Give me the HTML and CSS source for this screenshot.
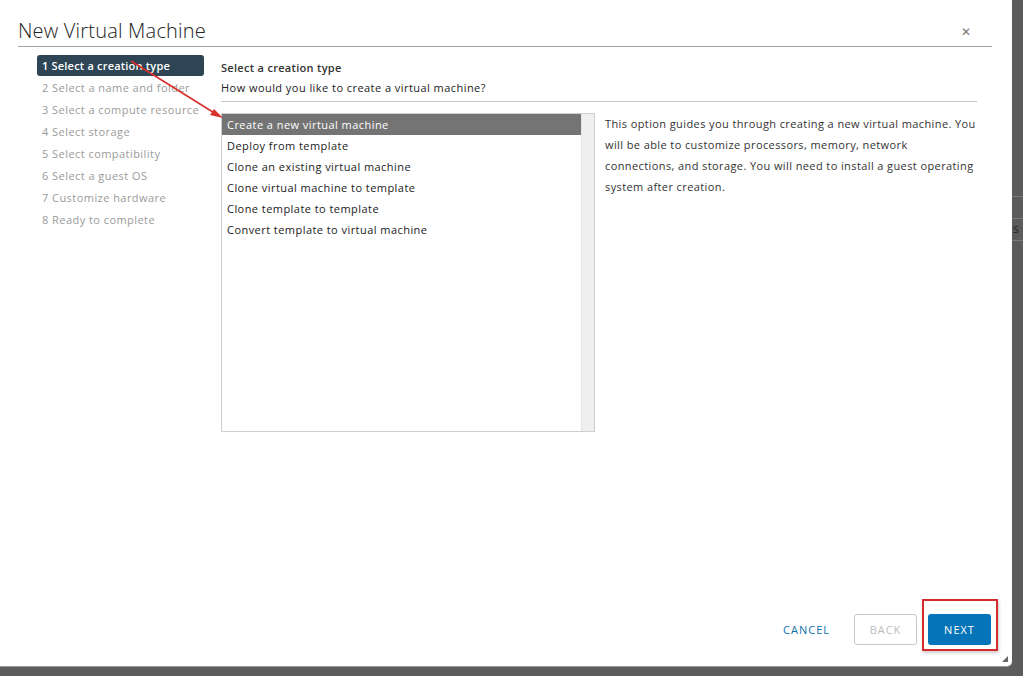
FILE: index.html
```html
<!DOCTYPE html>
<html>
<head>
  <meta charset="utf-8">
  <meta name="viewport" content="width=device-width, initial-scale=1.0">
  <title>New Virtual Machine</title>
  <link rel="stylesheet" href="styles.css">
</head>
<body>
    <div class="modal">
        <div class="modal-header">
            <h1 class="modal-title">New Virtual Machine</h1>
            <span class="close">&#x2715;</span>
        </div>
        <div class="modal-body">
            <ul class="steps">
                <li class="step active">1 Select a creation type</li>
                <li class="step">2 Select a name and folder</li>
                <li class="step">3 Select a compute resource</li>
                <li class="step">4 Select storage</li>
                <li class="step">5 Select compatibility</li>
                <li class="step">6 Select a guest OS</li>
                <li class="step">7 Customize hardware</li>
                <li class="step">8 Ready to complete</li>
            </ul>
            <div class="step-content">
                <div class="step-title">Select a creation type</div>
                <div class="step-question">How would you like to create a virtual machine?</div>
                <div class="choice-row">
                    <div class="list-box">
                        <ul class="options">
                            <li class="option selected">Create a new virtual machine</li>
                            <li class="option">Deploy from template</li>
                            <li class="option">Clone an existing virtual machine</li>
                            <li class="option">Clone virtual machine to template</li>
                            <li class="option">Clone template to template</li>
                            <li class="option">Convert template to virtual machine</li>
                        </ul>
                        <div class="scroll-track"></div>
                    </div>
                    <p class="description">This option guides you through creating a new virtual machine. You will be able to customize processors, memory, network connections, and storage. You will need to install a guest operating system after creation.</p>
                </div>
            </div>
        </div>
        <div class="modal-footer">
            <button class="btn btn-link">CANCEL</button>
            <button class="btn btn-outline" disabled>BACK</button>
            <span class="highlight">
                <button class="btn btn-primary">NEXT</button>
            </span>
        </div>
        <span class="grip"></span>
        <!-- annotation arrow -->
        <svg class="arrow" width="1012" height="666" viewBox="0 0 1012 666">
            <line x1="131" y1="61" x2="216" y2="114" stroke="#d9302c" stroke-width="1.6"/>
            <polygon points="223,118 210,115 214,109" fill="#d9302c"/>
        </svg>
    </div>
    <div class="backdrop">
        <div class="backdrop-row"></div>
        <div class="backdrop-row text-row">s</div>
        <div class="backdrop-row"></div>
    </div>
</body>
</html>
```

FILE: styles.css
```css
* {
    box-sizing: border-box;
}
body {
    margin: 0;
    height: 676px;
    overflow: hidden;
    display: flex;
    align-items: flex-start;
    background-color: #5c5c5c;
    font-family: "Open Sans", "Liberation Sans", sans-serif;
    font-size: 11px;
    letter-spacing: 0.45px;
    color: #333;
}
ul {
    list-style: none;
    margin: 0;
    padding: 0;
}

/* Modal */
.modal {
    position: relative;
    width: 1012px;
    height: 666px;
    flex: none;
    display: flex;
    flex-direction: column;
    background-color: #fff;
    border-bottom-right-radius: 5px;
    box-shadow: 0 1px 0 #9a9a9a;
}
.modal-header {
    display: flex;
    align-items: center;
    justify-content: space-between;
    height: 47px;
    margin: 0 20px 0 18px;
    padding-top: 14px;
    border-bottom: 1px solid #a3a3a3;
}
.modal-title {
    margin: 0;
    font-size: 20px;
    font-weight: 300;
    color: #222;
    letter-spacing: 0.2px;
}
.close {
    margin-right: 21px;
    margin-top: 2px;
    font-size: 12px;
    color: #777;
}
.modal-body {
    display: flex;
    flex: 1;
}

/* Wizard steps */
.steps {
    width: 204px;
    flex: none;
    padding: 8px 0 0 37px;
}
.step {
    height: 22px;
    line-height: 21px;
    padding-left: 5px;
    color: #9b9b9b;
    white-space: nowrap;
}
.step.active {
    height: 21px;
    margin-bottom: 1px;
    background-color: #2d4554;
    border-radius: 3px;
    color: #fff;
    font-weight: 600;
    letter-spacing: 0.2px;
}

/* Step content */
.step-content {
    width: 756px;
    margin-left: 17px;
    padding-top: 11px;
}
.step-title {
    line-height: 20px;
    font-weight: 600;
    letter-spacing: 0.3px;
    color: #333;
}
.step-question {
    line-height: 20px;
    padding-bottom: 3px;
    border-bottom: 1px solid #c6c6c6;
    color: #222;
}
.choice-row {
    display: flex;
    margin-top: 11px;
}
.list-box {
    display: flex;
    flex: none;
    width: 374px;
    height: 319px;
    border: 1px solid #cfcfcf;
}
.options {
    flex: 1;
}
.option {
    height: 21px;
    line-height: 21px;
    padding-left: 5px;
    color: #222;
}
.option.selected {
    background-color: #747474;
    color: #fff;
}
.scroll-track {
    width: 13px;
    background-color: #efefef;
    border-left: 1px solid #e4e4e4;
}
.description {
    flex: none;
    width: 373px;
    margin: 0 0 0 10px;
    line-height: 21px;
    letter-spacing: 0.4px;
    color: #333;
}

/* Footer */
.modal-footer {
    display: flex;
    justify-content: flex-end;
    align-items: flex-end;
    padding: 0 14px 15px 0;
}
.btn {
    height: 31px;
    font-family: inherit;
    font-size: 11px;
    letter-spacing: 1px;
    border-radius: 3px;
    margin-bottom: 6px;
}
.btn-link {
    padding: 0 12px;
    margin-right: 12px;
    border: none;
    background: none;
    color: #0a72ab;
}
.btn-outline {
    width: 63px;
    margin-right: 5px;
    border: 1px solid #c8c8c8;
    background-color: #fff;
    color: #bdbdbd;
}
.btn-primary {
    width: 63px;
    margin: 0;
    border: none;
    background-color: #0574b8;
    color: #fff;
}
.highlight {
    display: flex;
    padding: 13px 5px 4px 4px;
    border: 2px solid #d52b2f;
    box-shadow: 1px 2px 3px rgba(0, 0, 0, 0.2);
}
.grip {
    position: absolute;
    right: 4px;
    bottom: 4px;
    width: 0;
    height: 0;
    border-left: 6px solid transparent;
    border-bottom: 6px solid #666;
}
.arrow {
    position: absolute;
    left: 0;
    top: 0;
    pointer-events: none;
}

/* Page behind the modal */
.backdrop {
    flex: 1;
    padding-top: 196px;
}
.backdrop-row {
    height: 22px;
    border-top: 1px solid #7a7a7a;
}
.text-row {
    color: #222;
    font-size: 12px;
    line-height: 20px;
    padding-left: 1px;
}
```
